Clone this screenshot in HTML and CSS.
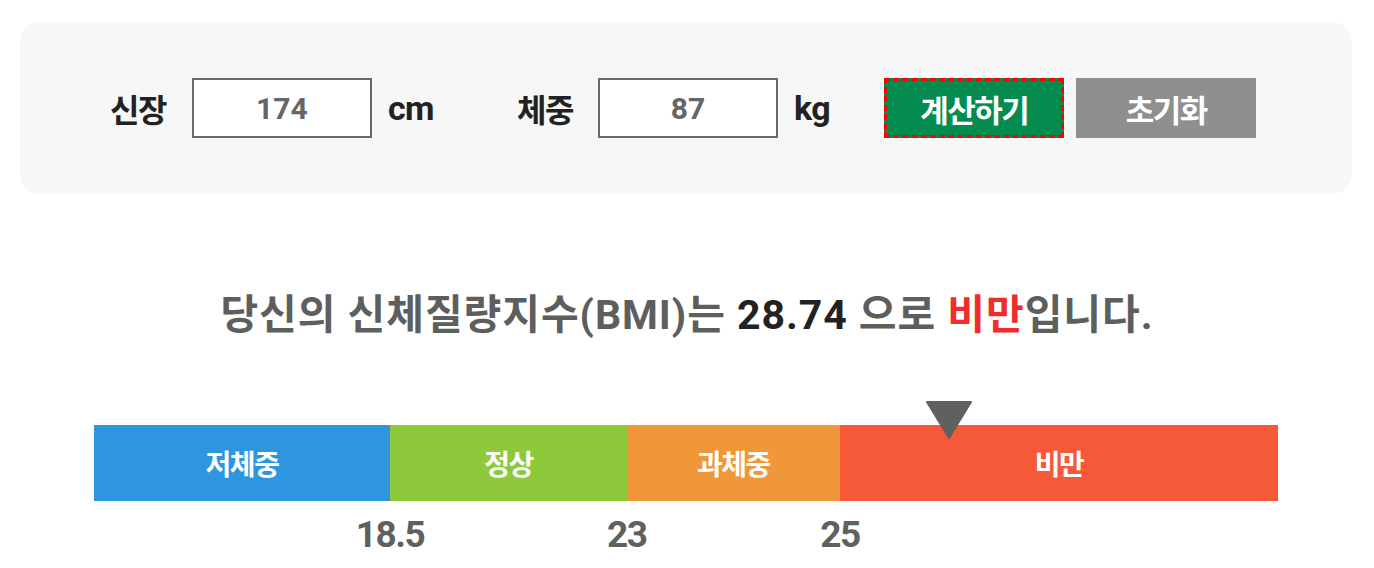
FILE: index.html
```html
<!DOCTYPE html>
<html lang="ko">
<head>
<meta charset="utf-8">
<title>BMI 계산기</title>
<link rel="stylesheet" href="styles.css">
</head>
<body>
<div class="panel">
  <span class="label">신장</span>
  <div class="field">174</div>
  <span class="unit">cm</span>
  <span class="label label-gap">체중</span>
  <div class="field">87</div>
  <span class="unit">kg</span>
  <button class="btn btn-calc">계산하기</button>
  <button class="btn btn-reset">초기화</button>
</div>

<p class="result">당신의 신체질량지수(BMI)는 <span class="num">28.74</span> 으로 <span class="level">비만</span>입니다.</p>

<div class="scale">
  <div class="bar">
    <div class="seg seg-under">저체중</div>
    <div class="seg seg-normal">정상</div>
    <div class="seg seg-over">과체중</div>
    <div class="seg seg-obese">비만</div>
    <svg class="marker" style="left: 72.22%" width="48" height="38" viewBox="0 0 48 38"><polygon points="2,1 46,1 24,37" fill="#5f615f" stroke="#5f615f" stroke-width="2" stroke-linejoin="round"/></svg>
  </div>
  <div class="ticks">
    <div class="tick"><span>18.5</span></div>
    <div class="tick"><span>23</span></div>
    <div class="tick"><span>25</span></div>
    <div class="tick"></div>
  </div>
</div>
</body>
</html>
```

FILE: styles.css
```css
html, body {
  margin: 0;
  padding: 0;
  background: #ffffff;
}

body {
  font-family: Roboto, "Noto Sans CJK KR", sans-serif;
  color: #222222;
}

.panel {
  margin: 22px 22px 0 20px;
  height: 172px;
  border-radius: 20px;
  background: #f7f7f7;
  display: flex;
  align-items: center;
  padding-left: 90px;
  box-sizing: border-box;
}

.label {
  font-family: "Noto Sans CJK KR", sans-serif;
  font-size: 32px;
  font-weight: 700;
  letter-spacing: -1.5px;
  color: #222222;
  margin-right: 26px;
}

.label-gap {
  margin-left: 83px;
  margin-right: 25px;
}

.field {
  width: 180px;
  height: 60px;
  box-sizing: border-box;
  border: 2px solid #6a6a6a;
  background: #ffffff;
  display: flex;
  align-items: center;
  justify-content: center;
  font-size: 30px;
  font-weight: 700;
  color: #666666;
}

.unit {
  margin-left: 16px;
  font-size: 34px;
  font-weight: 700;
  letter-spacing: -0.5px;
  color: #222222;
}

.btn {
  width: 180px;
  height: 60px;
  box-sizing: border-box;
  border: none;
  font-family: "Noto Sans CJK KR", sans-serif;
  font-size: 31px;
  font-weight: 700;
  letter-spacing: -1.5px;
  color: #ffffff;
  padding: 0;
  cursor: pointer;
}

.btn-calc {
  margin-left: 54px;
  background: #038b50;
  border: 3px dashed #ff0000;
}

.btn-reset {
  margin-left: 12px;
  background: #8f8f8f;
}

.result {
  margin: 96px 0 0;
  text-align: center;
  font-size: 41px;
  line-height: 50px;
  font-weight: 700;
  letter-spacing: 0.95px;
  color: #5d5f5e;
}

.result .num {
  color: #222222;
}

.result .level {
  color: #f22b2b;
}

.scale {
  margin: 85px 0 0 94px;
  width: 1184px;
}

.bar {
  position: relative;
  display: flex;
  height: 76px;
}

.seg {
  display: flex;
  align-items: center;
  justify-content: center;
  font-family: "Noto Sans CJK KR", sans-serif;
  font-size: 28px;
  font-weight: 700;
  letter-spacing: -1.5px;
  color: #ffffff;
}

.seg-under { width: 25%; background: #2e96df; }
.seg-normal { width: 20%; background: #8dc93a; }
.seg-over { width: 18%; background: #f0973a; }
.seg-obese { width: 37%; background: #f65937; }

.marker {
  position: absolute;
  top: -24px;
  transform: translateX(-50%);
}

.ticks {
  display: grid;
  grid-template-columns: 25% 20% 18% 37%;
  margin-top: 14px;
}

.tick {
  display: flex;
  justify-content: flex-end;
  height: 40px;
}

.tick span {
  display: inline-block;
  transform: translateX(50%);
  font-size: 37px;
  line-height: 40px;
  font-weight: 700;
  letter-spacing: -1.5px;
  color: #5f615f;
}
```
